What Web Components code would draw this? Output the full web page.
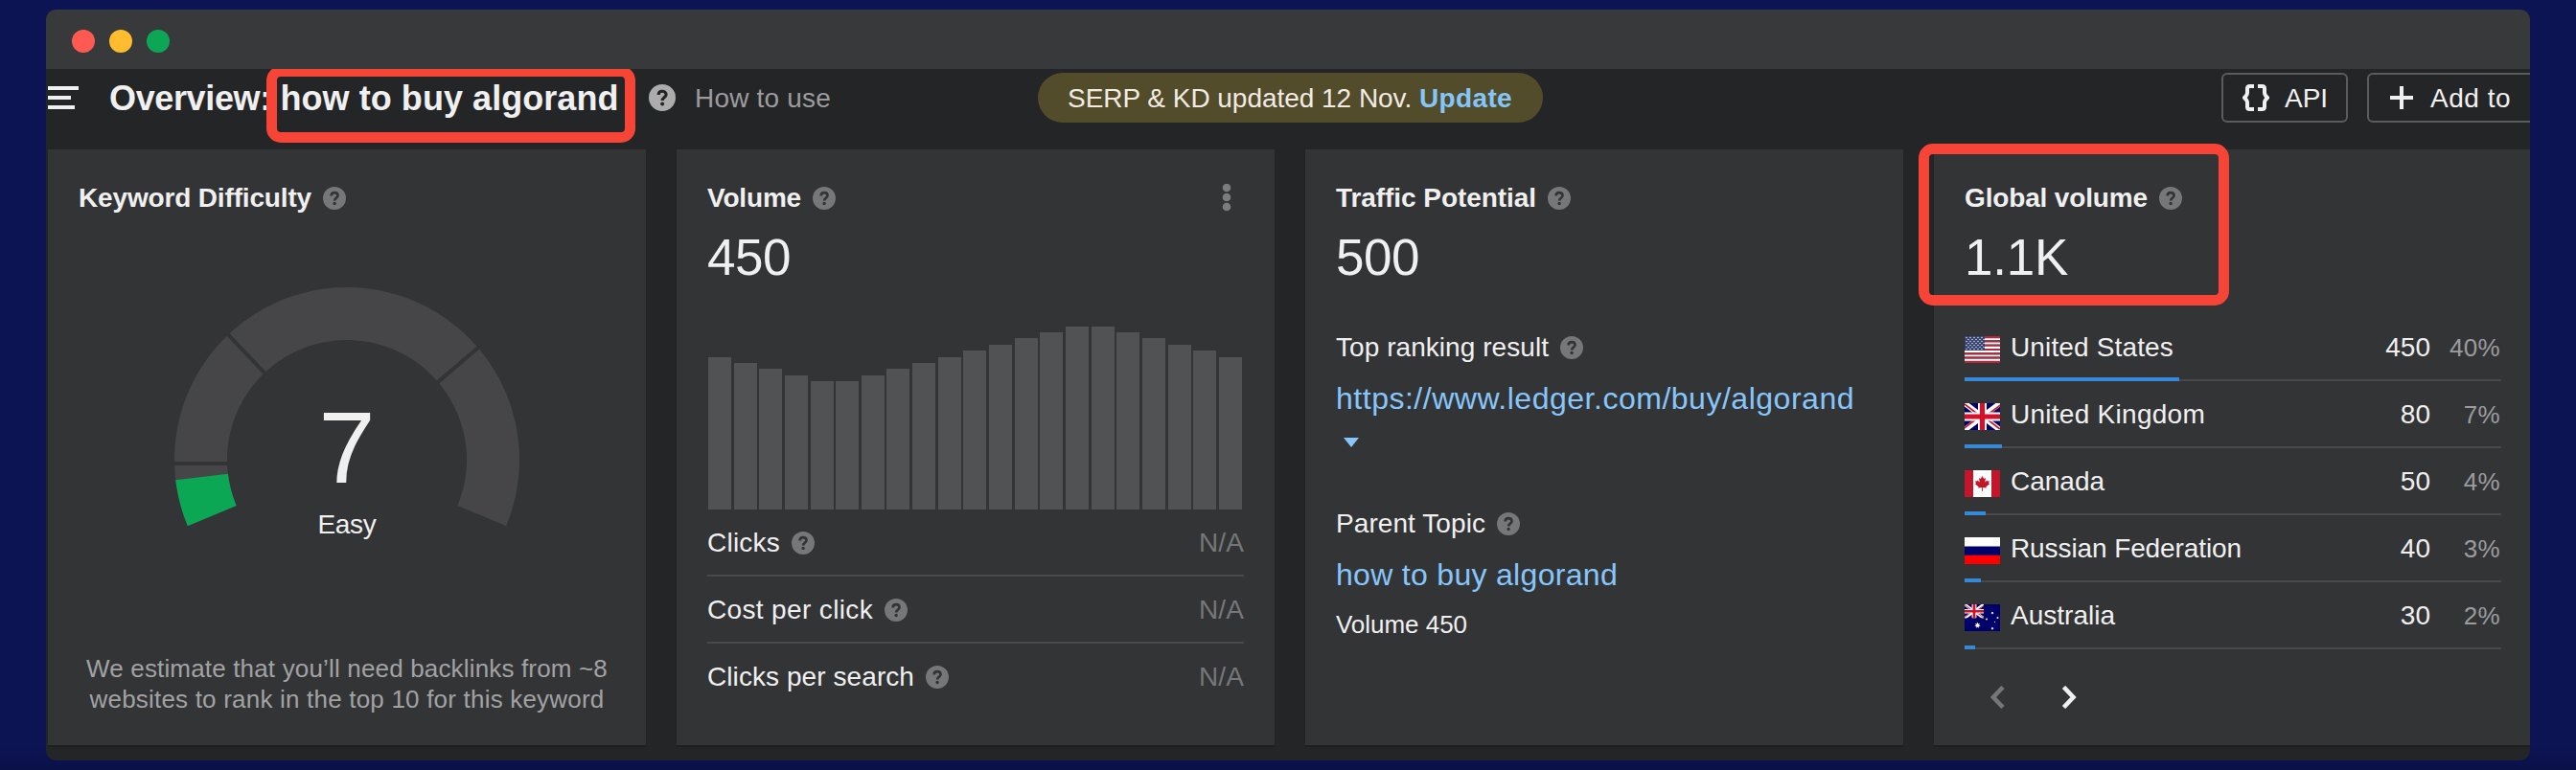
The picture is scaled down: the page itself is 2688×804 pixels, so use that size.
<!DOCTYPE html>
<html lang="en">
<head>
<meta charset="utf-8">
<title>Keyword overview</title>
<style>
html,body{margin:0;height:100%}
body{background:linear-gradient(#0c1453 0,#0c1453 780px,#0a1048 804px);font-family:"Liberation Sans",Arial,sans-serif;overflow:hidden;color:#f0f0f0}
</style>
</head>
<body>
<app-window></app-window>
<script>
const define = (name, html, setup) => {
  const tpl = document.createElement('template');
  tpl.innerHTML = html;
  customElements.define(name, class extends HTMLElement {
    connectedCallback() {
      if (this.shadowRoot) return;
      this.attachShadow({mode: 'open'}).append(tpl.content.cloneNode(true));
      if (setup) setup(this, this.shadowRoot);
    }
  });
};

/* A single line of text; "w" is its advance width, spread over the letters. */
define('text-run', `<style>:host{display:inline-block;white-space:pre;flex:none}</style><span><slot></slot></span>`, (el, root) => {
  const w = +el.getAttribute('w');
  const span = root.querySelector('span');
  const natural = span.getBoundingClientRect().width;
  if (w && natural) {
    el.style.letterSpacing = (w - natural) / el.textContent.length + 'px';
    el.style.width = w + 'px';
  }
});

define('help-icon', `<style>:host{display:block;flex:none;width:24px;height:24px;color:#767778;--mark:#333436}svg{display:block;width:100%;height:100%}</style>
<svg viewBox="0 0 24 24"><circle cx="12" cy="12" r="12" fill="currentColor"/><path d="M8.700 9.500C8.700 7.300 10.100 6.200 12 6.200s3.500 1.100 3.500 3c0 2.500-3.400 2.700-3.400 5.300" fill="none" stroke="var(--mark)" stroke-width="2.700"/><circle cx="12.100" cy="17.500" r="1.700" fill="var(--mark)"/></svg>`);

define('country-flag', `<style>:host{display:block;flex:none;width:37px;height:28px}svg{display:block}</style>`, (el, root) => {
  const jack = `<path fill="#00006b" d="M0 0h37v28H0z"/><path stroke="#fff" stroke-width="5.6" d="M0 0l37 28M37 0L0 28"/><path stroke="#cf142b" stroke-width="1.7" d="M0 1l17 13M37 27L20 14M38 1.5L20 15M-1 26.500L17 13"/><path stroke="#fff" stroke-width="9" d="M18.500 0v28M0 14h37"/><path stroke="#d3122a" stroke-width="5.200" d="M18.500 0v28M0 14h37"/>`;
  let stripes = '', stars = '';
  for (let i = 0; i < 13; i++) stripes += `<path fill="${i % 2 ? '#fff' : '#b2293f'}" d="M0 ${i * 28 / 13}h37v2.200H0z"/>`;
  for (let r = 0; r < 7; r++) for (let c = 0; c < 5; c++) stars += `<circle cx="${2 + c * 4 + (r % 2) * 2}" cy="${1.500 + r * 2}" r=".65" fill="#fff"/>`;
  const star = (x, y, r) => {
    let p = '';
    for (let i = 0; i < 14; i++) { const a = Math.PI * i / 7 - Math.PI / 2, q = i % 2 ? r * .45 : r; p += `${x + q * Math.cos(a)},${y + q * Math.sin(a)} `; }
    return `<polygon fill="#fff" points="${p}"/>`;
  };
  const art = {
    us: stripes + `<path fill="#33416f" d="M0 0h21v15H0z"/>` + stars,
    gb: jack,
    ca: `<path fill="#fff" d="M0 0h37v28H0z"/><path fill="#c4162a" d="M0 0h9v28H0zM28 0h9v28h-9zM18.500 6l1.700 3 1.800-.9-.7 4.300 2.200-2 .4 1.200 2-.3-.8 2.400 1 .6-3.700 3 .4 1.300-3.900-.5.1 3.600h-1l.1-3.600-3.900.5.4-1.300-3.700-3 1-.6-.8-2.400 2 .3.4-1.200 2.200 2-.7-4.300 1.800.9z"/>`,
    ru: `<path fill="#fff" d="M0 0h37v10H0z"/><path fill="#00006b" d="M0 9.500h37V19H0z"/><path fill="#fe0000" d="M0 18.700h37V28H0z"/>`,
    au: `<path fill="#00006b" d="M0 0h37v28H0z"/><svg width="20" height="14.500" viewBox="0 0 37 28" preserveAspectRatio="none">${jack}</svg>` + star(13.500, 22, 3.400) + star(29, 9, 1.600) + star(23, 15.500, 1.500) + star(34.500, 14, 1.500) + star(29, 25.200, 1.700) + star(31.500, 18.300, .9)
  };
  root.innerHTML += `<svg width="37" height="28" viewBox="0 0 37 28">${art[el.getAttribute('code')]}</svg>`;
});

/* Red outline laid over what it marks. */
define('mark-box', `<style>:host{display:block;position:absolute;box-sizing:border-box;border:11px solid #f64537;border-radius:15px;pointer-events:none;z-index:2}</style>`);

define('title-bar', `<style>:host{display:flex;box-sizing:border-box;height:62px;padding:5px 0 0 27px;gap:15px;align-items:flex-start;background:#38393b}i{width:24px;height:24px;border-radius:50%;margin-top:16px}</style>
<i style="background:#ff5a52"></i><i style="background:#ffbc2e"></i><i style="background:#0ca656"></i>`);

define('tool-button', `<style>:host{display:flex;flex:none;box-sizing:border-box;height:52px;border:2px solid #5b5c5e;border-radius:6px;align-items:center;font-size:28px;line-height:32px}</style><slot></slot>`);

define('page-header', `<style>
:host{display:flex;position:relative;box-sizing:border-box;height:84px;padding-left:2px;background:#242527;overflow:hidden;align-items:flex-start}
.menu{flex:none;margin-top:18px}
h1{margin:11px 0 0 32px;font-size:36px;line-height:40px;display:flex;flex:none}
help-icon{width:28px;height:28px;color:#acacad;--mark:#242527;margin:16px 0 0 31.500px}
.use{color:#9c9c9d;font-size:28px;line-height:32px;margin:15px 0 0 20px}
.pill{margin:4px 0 0 216px;height:52px;width:527px;flex:none;box-sizing:border-box;padding:11px 0 0 31px;border-radius:26px;background:#524c2b;font-size:28px;line-height:32px;color:#f1ebe4;display:flex}
.pill b{color:#85c6fa}
.tools{display:flex;gap:20px;margin:4px 0 0 708px;flex:none}
.tools text-run{padding-top:2px}
</style>
<svg class="menu" width="32" height="24"><path fill="#f0f0f0" d="M0 0h32v4H0zM0 10h24v4H0zM0 20h28v4H0z"/></svg>
<h1><text-run w="178.5">Overview: </text-run><text-run w="353">how to buy algorand</text-run></h1>
<help-icon></help-icon>
<text-run class="use" w="142">How to use</text-run>
<div class="pill"><text-run w="367">SERP &amp; KD updated 12 Nov. </text-run><b><text-run w="97">Update</text-run></b></div>
<div class="tools">
<tool-button style="width:132px;padding-left:20px"><svg width="28" height="28" viewBox="0 0 28 28" fill="none" stroke="#f0f0f0" stroke-width="4"><path d="M12 2H7.500Q5 2 5 4.500V9Q5 11 2 14Q5 17 5 19V23.500Q5 26 7.500 26H12M16 2h4.500Q23 2 23 4.500V9Q23 11 26 14Q23 17 23 19V23.500Q23 26 20.500 26H16"/></svg><text-run w="45" style="margin-left:16px">API</text-run></tool-button>
<tool-button style="width:200px;padding-left:22px"><svg width="24" height="24"><path fill="#f0f0f0" d="M10 0h4v10h10v4H14v10h-4V14H0v-4h10z"/></svg><text-run w="84" style="margin-left:18px">Add to</text-run></tool-button>
</div>
<mark-box style="left:230px;top:-3px;width:385px;height:79.500px"></mark-box>`);

define('metric-card', `<style>
:host{display:block;position:relative;flex:none;box-sizing:border-box;width:624px;height:622px;padding:34px 32px 0;background:#333436;box-shadow:0 2px 1px #1e1f21}
header{display:flex;align-items:center;height:34px;font:bold 28px/34px "Liberation Sans",Arial,sans-serif;gap:12px}
.more{margin-left:auto;margin-right:13px}
.big{font-size:53px;line-height:60px;height:60px;margin-top:15px}
</style>
<header></header><slot></slot>`, (el, root) => {
  const head = root.querySelector('header');
  head.innerHTML = `<text-run w="${el.getAttribute('title-width')}">${el.getAttribute('label')}</text-run><help-icon></help-icon>`;
  if (el.hasAttribute('more')) head.insertAdjacentHTML('beforeend', `<svg class="more" width="10" height="30" fill="#7b7c7d"><circle cx="5" cy="4" r="4.300"/><circle cx="5" cy="14" r="4.300"/><circle cx="5" cy="24" r="4.300"/></svg>`);
  const v = el.getAttribute('value');
  if (v) head.insertAdjacentHTML('afterend', `<div class="big"><text-run w="${el.getAttribute('value-width')}">${v}</text-run></div>`);
});

define('difficulty-gauge', `<style>
:host{display:flex;flex-direction:column;align-items:center}
.dial{display:grid;width:360px;height:270px;margin-top:76px}
.dial>*{grid-area:1/1}
.read{display:flex;flex-direction:column;align-items:center;padding-top:112px}
.score{font-size:106px;line-height:110px}
.word{font-size:28px;line-height:32px;margin-top:10px}
.note{display:flex;flex-direction:column;align-items:center;font-size:26px;line-height:32px;color:#a2a2a3;margin-top:112px}
</style>
<div class="dial"><svg width="360" height="270"></svg><div class="read"><div class="score">7</div><text-run class="word" w="61">Easy</text-run></div></div>
<div class="note"><text-run w="544">We estimate that you’ll need backlinks from ~8</text-run><text-run w="537">websites to rank in the top 10 for this keyword</text-run></div>`, (el, root) => {
  const pt = (r, deg) => { const a = deg * Math.PI / 180; return `${180 - r * Math.cos(a)} ${180 - r * Math.sin(a)}`; };
  const arc = (a, b, color) => `<path fill="${color}" d="M${pt(180, a)}A180 180 0 ${b - a > 180 ? 1 : 0} 1 ${pt(180, b)}L${pt(125, b)}A125 125 0 ${b - a > 180 ? 1 : 0} 0 ${pt(125, a)}Z"/>`;
  const cut = d => `<path stroke="#333436" stroke-width="4" d="M${pt(123, d)}L${pt(182, d)}"/>`;
  root.querySelector('svg').innerHTML = arc(-22.600, 202.600, '#464648') + arc(-22.600, -6.800, '#0ca755') + cut(46.500) + cut(139.500) + '<path stroke="#333436" stroke-width="4" d="M-2 184h62"/>';
});

define('volume-bars', `<style>:host{display:flex;align-items:flex-end;justify-content:space-between;height:212px;margin:21px 0 0 1px;width:557px}i{width:24px;background:#515254}</style>`, (el, root) => {
  for (const h of [159,153,147,140,134,134,140,147,153,159,166,172,179,185,191,191,185,179,172,166,159]) {
    const bar = document.createElement('i');
    bar.style.height = h + 'px';
    root.append(bar);
  }
});

define('metric-row', `<style>:host{display:flex;align-items:center;box-sizing:border-box;height:70px;border-bottom:2px solid #48494b;font-size:28px;line-height:32px;gap:12px}:host([last]){border-color:transparent}.na{margin-left:auto;color:#767778}.na,::slotted(text-run){padding-top:2px}help-icon{margin-top:2px}</style><slot></slot><help-icon></help-icon><text-run class="na" w="47">N/A</text-run>`);

define('field-label', `<style>:host{display:flex;align-items:center;height:32px;font-size:28px;line-height:32px;gap:12px}</style><slot></slot><help-icon></help-icon>`);

define('country-row', `<style>
:host{display:block;height:70px}
.line{display:flex;box-sizing:border-box;height:66px;padding-top:19px;font-size:28px;line-height:32px}
country-flag{margin:4px 11px 0 0}
.n{margin-left:auto}.p{box-sizing:border-box;width:74px;padding-right:1px;text-align:right;color:#9c9c9d;font-size:26px;letter-spacing:.3px}
.track{display:flex;align-items:flex-start;height:4px;background:linear-gradient(transparent 2px,#48494b 2px)}
.fill{height:4px;background:#3489d8}
</style><div class="line"></div><div class="track"><div class="fill"></div></div>`, (el, root) => {
  const a = n => el.getAttribute(n);
  root.querySelector('.line').innerHTML = `<country-flag code="${a('code')}"></country-flag><text-run w="${a('w')}">${a('name')}</text-run><span class="n">${a('count')}</span><span class="p">${a('share')}</span>`;
  root.querySelector('.fill').style.width = a('bar') + 'px';
});

define('app-window', `<style>
:host{display:block;box-sizing:border-box;width:2592px;height:784px;margin:10px 48px 0;border-radius:10px;background:#242527;overflow:hidden;position:relative}
main{display:flex;gap:32px;padding-left:2px}
.link{display:block;color:#87c6fa;font-size:32px;line-height:36px}
.list{margin-top:29px}
.caret{display:block;margin:23px 0 0 8px}
.sub{display:block;font-size:26px;line-height:32px;margin-top:18px}
.pager{display:block;margin:38px 0 0 26px}
</style>
<title-bar></title-bar><page-header></page-header>
<main>
<metric-card label="Keyword Difficulty" title-width="243"><difficulty-gauge></difficulty-gauge></metric-card>
<metric-card label="Volume" title-width="98" value="450" value-width="87" more><volume-bars></volume-bars>
<div><metric-row><text-run w="76">Clicks</text-run></metric-row><metric-row><text-run w="173">Cost per click</text-run></metric-row><metric-row last><text-run w="216">Clicks per search</text-run></metric-row></div></metric-card>
<metric-card label="Traffic Potential" title-width="209" value="500" value-width="87">
<field-label style="margin-top:48px"><text-run w="222">Top ranking result</text-run></field-label>
<text-run class="link" w="541" style="margin-top:19px">https://www.ledger.com/buy/algorand</text-run>
<svg class="caret" width="16" height="10"><path fill="#87c6fa" d="M0 0h16L8 10z"/></svg>
<field-label style="margin-top:64px"><text-run w="156">Parent Topic</text-run></field-label>
<text-run class="link" w="294" style="margin-top:19px">how to buy algorand</text-run>
<text-run class="sub" w="137">Volume 450</text-run>
</metric-card>
<metric-card label="Global volume" title-width="191" value="1.1K" value-width="108">
<div class="list">
<country-row code="us" name="United States" w="170" count="450" share="40%" bar="224"></country-row>
<country-row code="gb" name="United Kingdom" w="203" count="80" share="7%" bar="39"></country-row>
<country-row code="ca" name="Canada" w="98" count="50" share="4%" bar="22"></country-row>
<country-row code="ru" name="Russian Federation" w="241" count="40" share="3%" bar="17"></country-row>
<country-row code="au" name="Australia" w="109" count="30" share="2%" bar="11"></country-row>
</div>
<svg class="pager" width="94" height="24" fill="none" stroke-width="4.600"><path stroke="#757678" d="M14 1.500L4 12l10 10.500"/><path stroke="#f0f0f0" d="M77.500 1.500L87.500 12l-10 10.500"/></svg>
</metric-card>
</main>
<mark-box style="left:1954px;top:140px;width:324px;height:168.500px"></mark-box>`);
</script>
</body>
</html>
